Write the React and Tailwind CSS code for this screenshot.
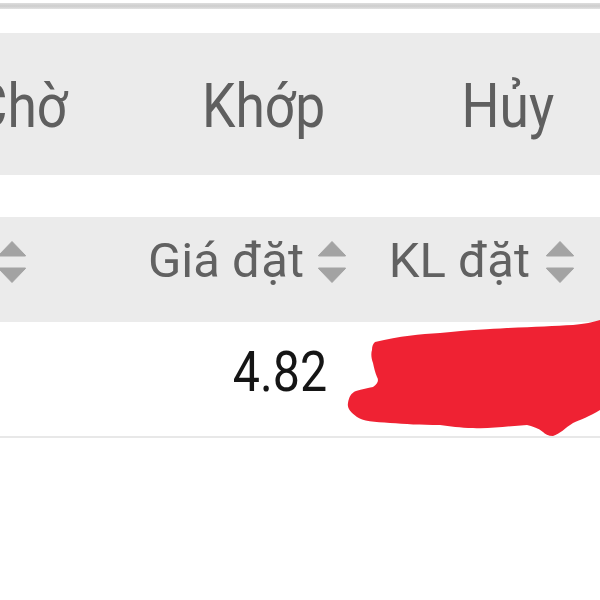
import React from "react";

function SortIcon() {
  return (
    <svg width="30" height="42" viewBox="0 0 30 42" className="flex-none block">
      <path d="M15 0.5 L28.5 14.5 Q29 15 28 15 L2 15 Q1 15 1.5 14.5 Z" fill="#a3a3a3" strokeLinejoin="round" stroke="#a3a3a3" strokeWidth="1" />
      <path d="M2 27 L28 27 Q29 27 28.5 27.5 L15 41.5 L1.5 27.5 Q1 27 2 27 Z" fill="#a3a3a3" strokeLinejoin="round" stroke="#a3a3a3" strokeWidth="1" />
    </svg>
  );
}

function Tab({ label }) {
  return (
    <div className="w-[244px] flex-none flex justify-center">
      <span className="inline-block whitespace-nowrap text-[62px] leading-none text-[#5f5f5f] scale-x-[0.86]">
        {label}
      </span>
    </div>
  );
}

export default function App() {
  return (
    <div className="relative w-[600px] h-[600px] overflow-hidden bg-white font-['Roboto',sans-serif]">
      <div className="pt-[3px] h-[33px]">
        <div className="h-[6px] bg-gradient-to-b from-[#dedede] via-[#cdcdcd] to-[#e2e2e2]" />
      </div>

      <div className="h-[142px] bg-[#ebebeb] pt-[42px] flex items-start">
        <div className="flex ml-[-102px]">
          <Tab label="Chờ" />
          <Tab label="Khớp" />
          <Tab label="Hủy" />
        </div>
      </div>

      <div className="h-[42px]" />

      <div className="h-[105px] bg-[#ebebeb] pt-[19px] flex items-start">
        <div className="w-[27px] flex-none flex justify-end">
          <div className="mt-[5px]">
            <SortIcon />
          </div>
        </div>
        <div className="w-[320px] flex-none flex justify-end items-start gap-[13px]">
          <span className="text-[49px] leading-none text-[#616161] whitespace-nowrap">Giá đặt</span>
          <div className="mt-[5px]">
            <SortIcon />
          </div>
        </div>
        <div className="w-[228px] flex-none flex justify-end items-start gap-[15px]">
          <span className="text-[49px] leading-none text-[#616161] whitespace-nowrap">KL đặt</span>
          <div className="mt-[5px]">
            <SortIcon />
          </div>
        </div>
      </div>

      <div className="h-[116px] border-b-2 border-[#e8e8e8] pt-[23px] flex items-start">
        <div className="w-[327px] flex-none flex justify-end">
          <span className="inline-block whitespace-nowrap text-[55px] leading-none text-[#151515] scale-x-[0.88] origin-right">
            4.82
          </span>
        </div>
      </div>

      <svg className="absolute left-0 top-0 pointer-events-none" width="600" height="600" viewBox="0 0 600 600">
        <path
          d="M375 342 C400 336 420 334 440 333 C470 330 490 329 507 328 C535 327 555 326 573 325 C585 324 593 322 600 320 L600 410 C590 416 580 420 573 423 C565 428 560 434 553 436 C548 436 545 434 543 432 C538 428 532 426 527 425 C510 426 490 429 473 428 C460 428 450 426 440 425 C420 425 405 424 390 423 C375 422 362 421 357 417 C350 412 347 408 348 403 C349 397 351 393 356 391 C362 389 368 388 373 387 C378 384 379 380 377 377 C375 372 374 368 373 363 C371 358 371 353 372 350 C372 346 373 344 375 342 Z"
          fill="#ef2233"
        />
      </svg>
    </div>
  );
}
